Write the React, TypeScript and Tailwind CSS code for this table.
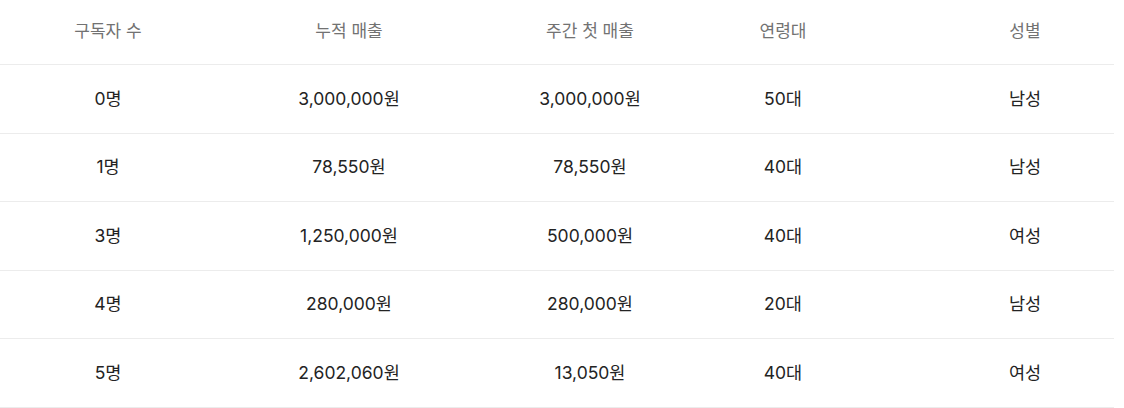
const headers = ["구독자 수", "누적 매출", "주간 첫 매출", "연령대", "성별"];

const rows = [
  ["0명", "3,000,000원", "3,000,000원", "50대", "남성"],
  ["1명", "78,550원", "78,550원", "40대", "남성"],
  ["3명", "1,250,000원", "500,000원", "40대", "여성"],
  ["4명", "280,000원", "280,000원", "20대", "남성"],
  ["5명", "2,602,060원", "13,050원", "40대", "여성"],
];

const grid = "grid grid-cols-[216px_266px_216px_170px_246px] w-[1114px]";
const lastCol = "pl-[68px]";

export default function App() {
  return (
    <div className="w-[1124px] h-[408px] bg-white overflow-hidden font-['Inter','Noto_Sans_CJK_KR',sans-serif]">
      {/* Header */}
      <div className={`${grid} h-[65px] items-center border-b-[1.5px] border-[#ececec]`}>
        {headers.map((h, i) => (
          <div
            key={h}
            className={`text-center text-[17px] text-[#727272] pb-[1px] ${i === 4 ? lastCol : ""}`}
          >
            {h}
          </div>
        ))}
      </div>

      {/* Rows */}
      {rows.map((r, ri) => (
        <div key={ri} className={`${grid} h-[68.5px] items-center border-b-[1.5px] border-[#ececec]`}>
          {r.map((c, i) => (
            <div key={i} className={`text-center text-[17.5px] text-[#232323] ${i === 4 ? lastCol : ""}`}>
              {c}
            </div>
          ))}
        </div>
      ))}
    </div>
  );
}
